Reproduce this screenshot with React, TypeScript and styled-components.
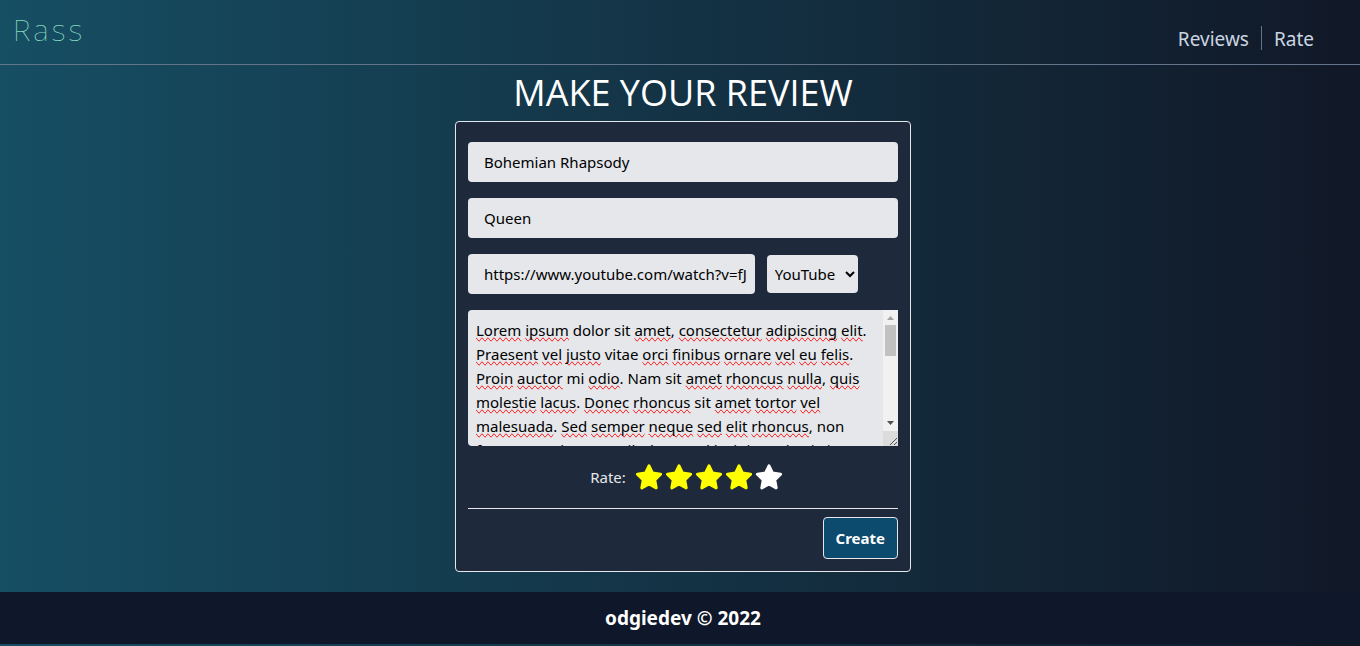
import React, { useRef, useState } from "react";
import styled, { createGlobalStyle } from "styled-components";

const GlobalStyle = createGlobalStyle`
  *, *::before, *::after { box-sizing: border-box; }
  body {
    margin: 0;
    font-family: "Noto Sans", "Open Sans", sans-serif;
    font-size: 15px;
    line-height: 24px;
  }
  input, textarea, select, button { font: inherit; margin: 0; }
`;

const Page = styled.div`
  display: flex;
  flex-direction: column;
  min-height: 100vh;
  background: linear-gradient(to right, #164e63, #111827);
`;

const Header = styled.header`
  display: flex;
  justify-content: space-between;
  align-items: flex-start;
  padding: 12px 40px 14px 13px;
  border-bottom: 1px solid #64748b;
`;

const Logo = styled.a`
  color: #86d9bd;
  font-size: 30px;
  font-weight: 100;
  line-height: 36px;
  letter-spacing: 3px;
  text-decoration: none;
`;

const Nav = styled.nav`
  display: flex;
  padding-top: 14px;
  padding-right: 6px;
`;

const NavLink = styled.a`
  padding: 0 12px;
  color: #cbd5e1;
  font-size: 19px;
  line-height: 26px;
  height: 24px;
  text-decoration: none;

  &:first-child { border-right: 1px solid #64748b; }
  &:last-child { padding-right: 0; }
`;

const Main = styled.main`
  display: flex;
  flex-direction: column;
  align-items: center;
  padding: 8px 0 20px 6px;
`;

const Title = styled.h1`
  margin: 0 0 8px;
  color: #fff;
  font-family: "Open Sans", "Noto Sans", sans-serif;
  font-size: 36px;
  font-weight: 400;
  line-height: 40px;
  text-transform: uppercase;
`;

const Card = styled.form`
  display: flex;
  flex-direction: column;
  width: 100%;
  max-width: 456px;
  padding: 20px 12px 12px;
  border: 1px solid #e5e7eb;
  border-radius: 4px;
  background: #1e293b;
`;

const Fields = styled.div`
  display: flex;
  flex-direction: column;
  gap: 16px;
`;

const TextInput = styled.input`
  width: 100%;
  height: 40px;
  padding: 8px 8px 8px 16px;
  border: 0;
  border-radius: 4px;
  background: #e5e7eb;
  color: #000;
`;

const LinkRow = styled.div`
  display: grid;
  grid-template-columns: 2fr 1fr;
  align-items: center;
`;

const SourceSelect = styled.select`
  justify-self: start;
  width: 91px;
  height: 38px;
  margin-left: 12px;
  padding: 0 4px;
  border: 0;
  border-radius: 4px;
  background: #e5e7eb;
  color: #000;
`;

const Editor = styled.div`
  display: flex;
  height: 136px;
  overflow: hidden;
  border-radius: 4px 0 0 4px;
  background: #e5e7eb;
`;

const EditorBody = styled.div`
  display: grid;
  grid-template: 100% / 100%;
  flex: 1;
  min-width: 0;
`;

const SpellLayer = styled.div`
  grid-area: 1 / 1;
  overflow: hidden;
  padding: 8px;
  color: transparent;
  white-space: pre-wrap;
  overflow-wrap: break-word;
`;

const Misspelled = styled.span`
  text-decoration-line: spelling-error;
`;

const EditorText = styled.textarea`
  grid-area: 1 / 1;
  padding: 8px;
  border: 0;
  outline: 0;
  resize: none;
  background: transparent;
  color: #000;
  scrollbar-width: none;
`;

const ScrollBar = styled.div`
  display: flex;
  flex-direction: column;
  width: 15px;
  background: #f1f1f1;
`;

const ScrollTrack = styled.div`
  flex: 1;
  padding: 0 2px;
`;

const ScrollThumb = styled.div`
  height: 31px;
  background: #c1c1c1;
`;

const ScrollIcon = styled.svg`
  display: block;
  flex: none;
`;

const RateRow = styled.div`
  display: flex;
  justify-content: center;
  align-items: center;
  height: 63px;
  padding-left: 8px;
  border-bottom: 1px solid #e5e7eb;
  color: #e5e7eb;
`;

const Stars = styled.div`
  display: flex;
  margin-left: 8px;
`;

const StarLabel = styled.label<{ $on: boolean }>`
  position: relative;
  display: flex;
  width: 30px;
  color: ${(p) => (p.$on ? "#ffff00" : "#ffffff")};
  cursor: pointer;
`;

const StarInput = styled.input`
  position: absolute;
  opacity: 0;
  pointer-events: none;
`;

const Actions = styled.div`
  display: flex;
  justify-content: flex-end;
  padding-top: 8px;
`;

const CreateButton = styled.button`
  padding: 8px 12px;
  border: 1px solid #e5e7eb;
  border-radius: 4px;
  background: #0c4a6e;
  color: #fff;
  font-weight: 700;
`;

const Footer = styled.footer`
  padding: 12px 0 12px 6px;
  background: #0f172a;
  color: #fff;
  font-size: 19px;
  font-weight: 700;
  line-height: 28px;
  text-align: center;
`;

const REVIEW = [
  "Lorem ipsum dolor sit amet, consectetur adipiscing elit.",
  "Praesent vel justo vitae orci finibus ornare vel eu felis.",
  "Proin auctor mi odio. Nam sit amet rhoncus nulla, quis",
  "molestie lacus. Donec rhoncus sit amet tortor vel",
  "malesuada. Sed semper neque sed elit rhoncus, non",
  "fermentum justo vestibulum, sed lacinia molestie in",
  "tortor. Donec semper neque vel justo finibus, quis",
  "ornare orci auctor. Nam vitae lacus eu odio rhoncus.",
].join(" ");

const DICTIONARY = new Set(["dolor", "sit", "vitae", "mi", "nam", "non", "in", "id"]);

function SpellChecked({ text }: { text: string }) {
  return (
    <>
      {text.split(/([A-Za-z]+)/).map((part, i) =>
        i % 2 === 1 && !DICTIONARY.has(part.toLowerCase()) ? (
          <Misspelled key={i}>{part}</Misspelled>
        ) : (
          part
        )
      )}
    </>
  );
}

function ReviewEditor() {
  const [text, setText] = useState(REVIEW);
  const layer = useRef<HTMLDivElement>(null);
  return (
    <Editor>
      <EditorBody>
        <SpellLayer ref={layer} aria-hidden="true">
          <SpellChecked text={text} />
        </SpellLayer>
        <EditorText
          aria-label="Review"
          spellCheck={false}
          value={text}
          onChange={(e) => setText(e.target.value)}
          onScroll={(e) => {
            if (layer.current) layer.current.scrollTop = e.currentTarget.scrollTop;
          }}
        />
      </EditorBody>
      <ScrollBar aria-hidden="true">
        <ScrollIcon width="15" height="15" viewBox="0 0 15 15">
          <path d="M4 10L7.5 6L11 10Z" fill="#a3a3a3" />
        </ScrollIcon>
        <ScrollTrack>
          <ScrollThumb />
        </ScrollTrack>
        <ScrollIcon width="15" height="15" viewBox="0 0 15 15">
          <path d="M4 5L7.5 9L11 5Z" fill="#505050" />
        </ScrollIcon>
        <ScrollIcon width="15" height="15" viewBox="0 0 15 15">
          <path d="M0 0H15V15H0Z" fill="#dcdcdc" />
          <path d="M7 14L14 7M11 14L14 11" stroke="#505050" fill="none" />
        </ScrollIcon>
      </ScrollBar>
    </Editor>
  );
}

function Star() {
  return (
    <svg width="30" height="30" viewBox="0 0 30 30" aria-hidden="true">
      <path
        d="M15 3.8L18.5 11.1L26.6 12.2L20.7 17.9L22.2 25.9L15 22L7.8 25.9L9.3 17.9L3.4 12.2L11.5 11.1Z"
        fill="currentColor"
        stroke="currentColor"
        strokeWidth="3"
        strokeLinejoin="round"
      />
    </svg>
  );
}

function StarRating() {
  const [rating, setRating] = useState(4);
  return (
    <RateRow role="radiogroup" aria-labelledby="rate-label">
      <span id="rate-label">Rate:</span>
      <Stars>
        {[1, 2, 3, 4, 5].map((n) => (
          <StarLabel key={n} $on={n <= rating}>
            <StarInput
              type="radio"
              name="rating"
              value={n}
              aria-label={`${n} of 5`}
              checked={n === rating}
              onChange={() => setRating(n)}
            />
            <Star />
          </StarLabel>
        ))}
      </Stars>
    </RateRow>
  );
}

export default function App() {
  return (
    <Page>
      <GlobalStyle />
      <Header>
        <Logo href="#">Rass</Logo>
        <Nav>
          <NavLink href="#reviews">Reviews</NavLink>
          <NavLink href="#rate">Rate</NavLink>
        </Nav>
      </Header>
      <Main>
        <Title>Make your review</Title>
        <Card onSubmit={(e) => e.preventDefault()}>
          <Fields>
            <TextInput aria-label="Song" defaultValue="Bohemian Rhapsody" />
            <TextInput aria-label="Artist" defaultValue="Queen" />
            <LinkRow>
              <TextInput
                aria-label="Link"
                defaultValue="https://www.youtube.com/watch?v=fJ9rUzIMcZQ"
              />
              <SourceSelect aria-label="Source" defaultValue="YouTube">
                <option>YouTube</option>
                <option>Spotify</option>
              </SourceSelect>
            </LinkRow>
            <ReviewEditor />
          </Fields>
          <StarRating />
          <Actions>
            <CreateButton type="submit">Create</CreateButton>
          </Actions>
        </Card>
      </Main>
      <Footer>odgiedev © 2022</Footer>
    </Page>
  );
}
